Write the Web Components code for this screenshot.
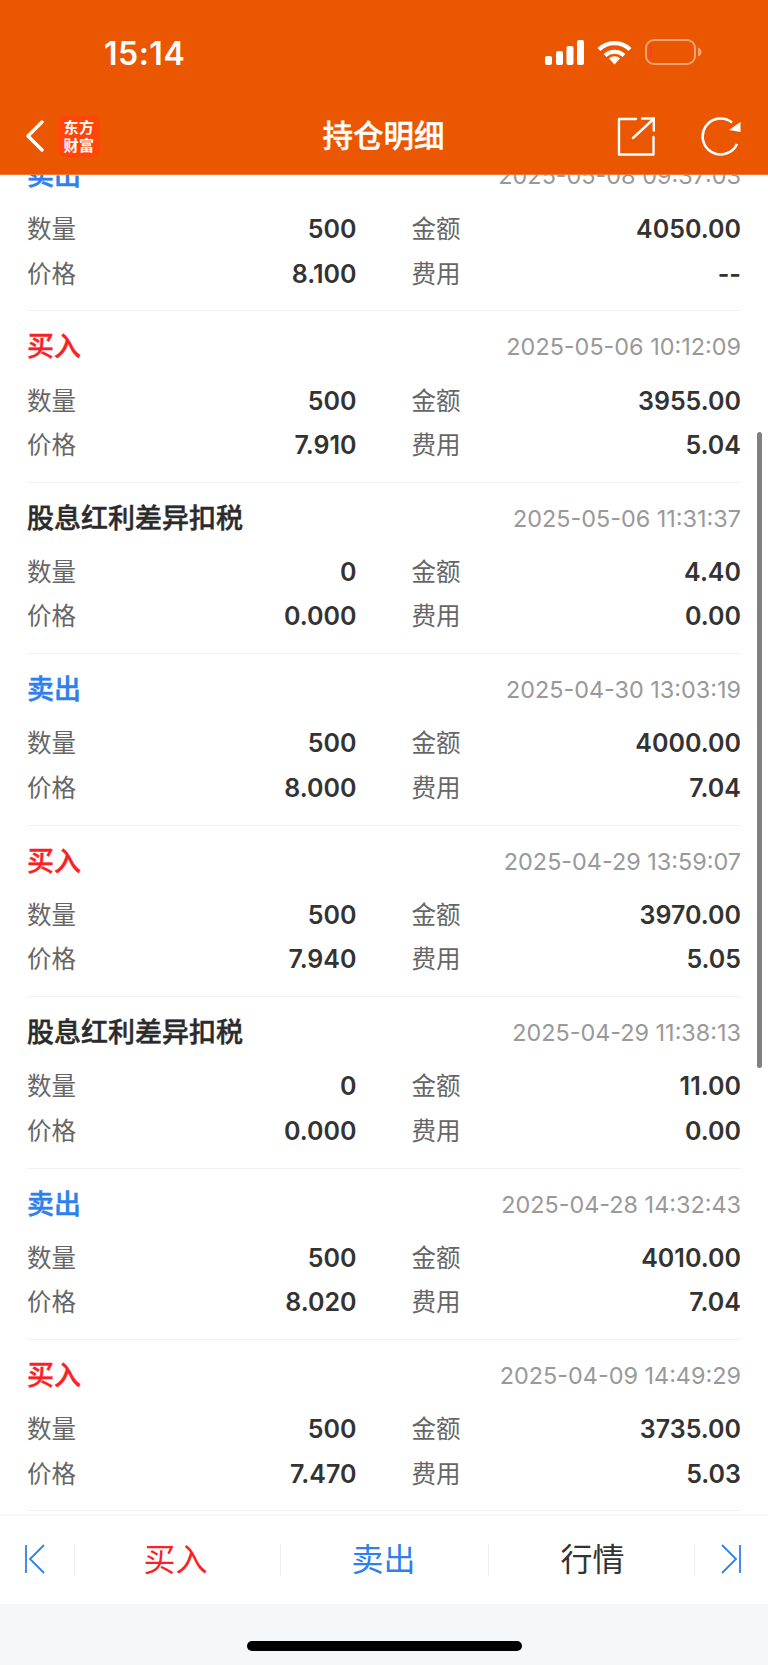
<!DOCTYPE html>
<html lang="zh">
<head>
<meta charset="utf-8">
<title>持仓明细</title>
<style>
    html, body { margin: 0; padding: 0; background: #fff; }
    body { width: 768px; height: 1665px; overflow: hidden; font-family: Inter, "Noto Sans CJK SC", sans-serif; }
</style>
</head>
<body>
<position-page>
    <status-bar slot="top" time="15:14"></status-bar>
    <nav-bar slot="top">持仓明细</nav-bar>

    <trade-row kind="sell" qty="500" amount="4050.00" price="8.100" fee="--"><span slot="title">卖出</span><span slot="date">2025-05-08 09:37:03</span></trade-row>
    <trade-row kind="buy" qty="500" amount="3955.00" price="7.910" fee="5.04"><span slot="title">买入</span><span slot="date">2025-05-06 10:12:09</span></trade-row>
    <trade-row qty="0" amount="4.40" price="0.000" fee="0.00"><span slot="title">股息红利差异扣税</span><span slot="date">2025-05-06 11:31:37</span></trade-row>
    <trade-row kind="sell" qty="500" amount="4000.00" price="8.000" fee="7.04"><span slot="title">卖出</span><span slot="date">2025-04-30 13:03:19</span></trade-row>
    <trade-row kind="buy" qty="500" amount="3970.00" price="7.940" fee="5.05"><span slot="title">买入</span><span slot="date">2025-04-29 13:59:07</span></trade-row>
    <trade-row qty="0" amount="11.00" price="0.000" fee="0.00"><span slot="title">股息红利差异扣税</span><span slot="date">2025-04-29 11:38:13</span></trade-row>
    <trade-row kind="sell" qty="500" amount="4010.00" price="8.020" fee="7.04"><span slot="title">卖出</span><span slot="date">2025-04-28 14:32:43</span></trade-row>
    <trade-row kind="buy" qty="500" amount="3735.00" price="7.470" fee="5.03"><span slot="title">买入</span><span slot="date">2025-04-09 14:49:29</span></trade-row>

    <bottom-bar slot="bottom"></bottom-bar>
    <home-bar slot="bottom"></home-bar>
</position-page>

<script>
class PositionPage extends HTMLElement {
    connectedCallback() {
        this.attachShadow({ mode: 'open' });
        this.shadowRoot.innerHTML = `
            <style>
                :host {
                    display: flex;
                    flex-direction: column;
                    width: 768px;
                    height: 1665px;
                    background: #fff;
                }
                .top {
                    background: #eb5600;
                    border-bottom: 1px solid #f0763a;
                    position: relative;
                    z-index: 1;
                }
                .list {
                    flex: 1;
                    min-height: 0;
                    overflow: hidden;
                    position: relative;
                }
                .rows {
                    margin-top: -35px;
                }
                .thumb {
                    position: absolute;
                    left: 757px;
                    top: 257px;
                    width: 5px;
                    height: 636px;
                    border-radius: 3px;
                    background: #808080;
                }
            </style>
            <div class="top"><slot name="top"></slot></div>
            <div class="list">
                <div class="rows"><slot></slot></div>
                <div class="thumb"></div>
            </div>
            <slot name="bottom"></slot>
        `;
    }
}
customElements.define('position-page', PositionPage);

class StatusBar extends HTMLElement {
    connectedCallback() {
        this.attachShadow({ mode: 'open' });
        this.shadowRoot.innerHTML = `
            <style>
                :host {
                    display: flex;
                    align-items: center;
                    justify-content: space-between;
                    height: 100px;
                    padding: 4px 66px 0 104px;
                    box-sizing: border-box;
                    color: #fff;
                }
                .time {
                    font: 600 32px/36px Inter, sans-serif;
                    letter-spacing: .5px;
                    margin-top: 4px;
                }
                .icons {
                    display: flex;
                    align-items: center;
                    gap: 13px;
                }
                svg { display: block; }
            </style>
            <span class="time">${this.getAttribute('time')}</span>
            <div class="icons">
                <svg width="39" height="25" viewBox="0 0 39 25" fill="#fff">
                    <rect x="0" y="16" width="7" height="9" rx="2"/>
                    <rect x="11" y="11" width="7" height="14" rx="2"/>
                    <rect x="21.5" y="6" width="7" height="19" rx="2"/>
                    <rect x="32" y="0" width="7" height="25" rx="2"/>
                </svg>
                <svg width="35" height="25" viewBox="0 0 35 25" fill="none" stroke="#fff" stroke-width="4.2">
                    <path d="M2 9.500C10.500 1 24.500 1 33 9.500"/>
                    <path d="M8 15.500C13.500 10.500 21.500 10.500 27 15.500"/>
                    <path d="M12 18.500L17.500 24.500L23 18.500C20 15.500 15 15.500 12 18.500Z" fill="#fff" stroke="none"/>
                </svg>
                <svg width="57" height="26" viewBox="0 0 57 26" fill="none">
                    <rect x="1" y="1" width="49" height="24" rx="8" stroke="#fff" stroke-opacity=".45" stroke-width="2"/>
                    <rect x="5" y="7" width="2" height="12" fill="#ff3b30"/>
                    <path d="M53 8.500C55.500 9.500 56.500 11 56.500 13C56.500 15 55.500 16.500 53 17.500Z" fill="#fff" fill-opacity=".45"/>
                </svg>
            </div>
        `;
    }
}
customElements.define('status-bar', StatusBar);

class NavBar extends HTMLElement {
    connectedCallback() {
        this.attachShadow({ mode: 'open' });
        this.shadowRoot.innerHTML = `
            <style>
                :host {
                    display: grid;
                    grid-template-columns: 1fr auto 1fr;
                    align-items: center;
                    height: 74px;
                    padding: 0 27px 2px 26px;
                    box-sizing: border-box;
                    color: #fff;
                }
                .left, .right {
                    display: flex;
                    align-items: center;
                }
                .left { gap: 14px; }
                .right { justify-content: flex-end; gap: 46px; }
                .logo {
                    flex: none;
                    width: 42px;
                    height: 42px;
                    border-radius: 9px;
                    background: #ff4508;
                    font: 700 15px/18px "Noto Sans CJK SC", sans-serif;
                    letter-spacing: .5px;
                    text-align: center;
                    display: flex;
                    flex-direction: column;
                    justify-content: center;
                }
                .title {
                    font: 500 30.5px/40px "Noto Sans CJK SC", sans-serif;
                    -webkit-text-stroke: .4px #fff;
                    padding-bottom: 4px;
                }
                svg { display: block; }
            </style>
            <div class="left">
                <svg width="18" height="32" viewBox="0 0 18 32" fill="none" stroke="#fff" stroke-width="3.4" stroke-linecap="round" stroke-linejoin="round">
                    <path d="M16 2L2 16L16 30"/>
                </svg>
                <div class="logo"><span>东方</span><span>财富</span></div>
            </div>
            <div class="title"><slot></slot></div>
            <div class="right">
                <svg width="39" height="39" viewBox="0 0 39 39" fill="none" stroke="#fff" stroke-width="2.4" stroke-linejoin="round" stroke-linecap="round">
                    <path d="M20 2H3V37.500H37.500V20"/>
                    <path d="M17 21L37.500 2"/>
                    <path d="M25 1.500H37.800V14.500" stroke-linecap="butt" stroke-linejoin="miter"/>
                </svg>
                <svg width="40" height="40" viewBox="0 0 40 40" fill="none" stroke="#fff" stroke-width="2.6">
                    <path d="M31 6.500A18 18 0 1 0 36 28"/>
                    <path d="M39.500 6V16L28 14Z" fill="#fff" stroke="none"/>
                </svg>
            </div>
        `;
    }
}
customElements.define('nav-bar', NavBar);

class TradeRow extends HTMLElement {
    connectedCallback() {
        const colors = { buy: '#fb1f26', sell: '#2f80ed' };
        const titleColor = colors[this.getAttribute('kind')] || '#2b2b2b';
        this.attachShadow({ mode: 'open' });
        this.shadowRoot.innerHTML = `
            <style>
                :host {
                    display: block;
                    box-sizing: border-box;
                    height: 171.43px;
                    margin: 0 27px;
                    padding-top: 17px;
                    border-bottom: 1px solid #f1f1f1;
                }
                .head {
                    display: flex;
                    justify-content: space-between;
                    align-items: center;
                    height: 38px;
                    margin-bottom: 11px;
                }
                .title {
                    font: 500 27px/38px "Noto Sans CJK SC", sans-serif;
                    color: ${titleColor};
                    -webkit-text-stroke: .45px ${titleColor};
                    padding-bottom: 4px;
                }
                .date {
                    font: 400 23.4px/38px Inter, sans-serif;
                    color: #999;
                }
                .grid {
                    display: grid;
                    grid-template-columns: 1fr 1fr;
                    column-gap: 55px;
                }
                .cell {
                    display: flex;
                    justify-content: space-between;
                    align-items: center;
                    height: 44.4px;
                }
                .label {
                    font: 400 24.500px/44px "Noto Sans CJK SC", sans-serif;
                    color: #666;
                }
                .value {
                    font: 600 25px/44px Inter, sans-serif;
                    color: #333;
                    padding-top: 2px;
                }
            </style>
            <div class="head">
                <span class="title"><slot name="title"></slot></span>
                <span class="date"><slot name="date"></slot></span>
            </div>
            <div class="grid">
                <div class="cell"><span class="label">数量</span><span class="value">${this.getAttribute('qty')}</span></div>
                <div class="cell"><span class="label">金额</span><span class="value">${this.getAttribute('amount')}</span></div>
                <div class="cell"><span class="label">价格</span><span class="value">${this.getAttribute('price')}</span></div>
                <div class="cell"><span class="label">费用</span><span class="value">${this.getAttribute('fee')}</span></div>
            </div>
        `;
    }
}
customElements.define('trade-row', TradeRow);

class BottomBar extends HTMLElement {
    connectedCallback() {
        this.attachShadow({ mode: 'open' });
        this.shadowRoot.innerHTML = `
            <style>
                :host {
                    display: grid;
                    grid-template-columns: 75px 206px 208px 206px 1fr;
                    align-items: center;
                    height: 90px;
                    background: #fff;
                    border-top: 2px solid #f6f6f6;
                    box-sizing: border-box;
                    font: 400 32px/40px "Noto Sans CJK SC", sans-serif;
                }
                .cell {
                    height: 30px;
                    display: flex;
                    align-items: center;
                    justify-content: center;
                    border-right: 1px solid #eeeeee;
                    padding-bottom: 2px;
                }
                .cell span { padding-bottom: 5px; }
                .first { justify-content: flex-start; padding-left: 24px; }
                .last { justify-content: flex-end; padding-right: 26px; border-right: 0; }
                .buy { color: #fb1f26; padding-right: 4px; }
                .sell { color: #2f80ed; padding-right: 2px; }
                .quote { color: #333; padding-left: 2px; }
                svg { display: block; }
            </style>
            <div class="cell first">
                <svg width="22" height="30" viewBox="0 0 22 30" fill="none" stroke="#2f80ed" stroke-width="1.800">
                    <path d="M2 1V29"/>
                    <path d="M20 1L6 15L20 29"/>
                </svg>
            </div>
            <div class="cell buy"><span>买入</span></div>
            <div class="cell sell"><span>卖出</span></div>
            <div class="cell quote"><span>行情</span></div>
            <div class="cell last">
                <svg width="22" height="30" viewBox="0 0 22 30" fill="none" stroke="#2f80ed" stroke-width="1.800">
                    <path d="M20 1V29"/>
                    <path d="M2 1L16 15L2 29"/>
                </svg>
            </div>
        `;
    }
}
customElements.define('bottom-bar', BottomBar);

class HomeBar extends HTMLElement {
    connectedCallback() {
        this.attachShadow({ mode: 'open' });
        this.shadowRoot.innerHTML = `
            <style>
                :host {
                    display: flex;
                    justify-content: center;
                    align-items: flex-start;
                    height: 61px;
                    padding-top: 37px;
                    box-sizing: border-box;
                    background: #f6f7f9;
                }
                .pill {
                    width: 275px;
                    height: 10px;
                    border-radius: 5px;
                    background: #000;
                }
            </style>
            <div class="pill"></div>
        `;
    }
}
customElements.define('home-bar', HomeBar);
</script>
</body>
</html>
